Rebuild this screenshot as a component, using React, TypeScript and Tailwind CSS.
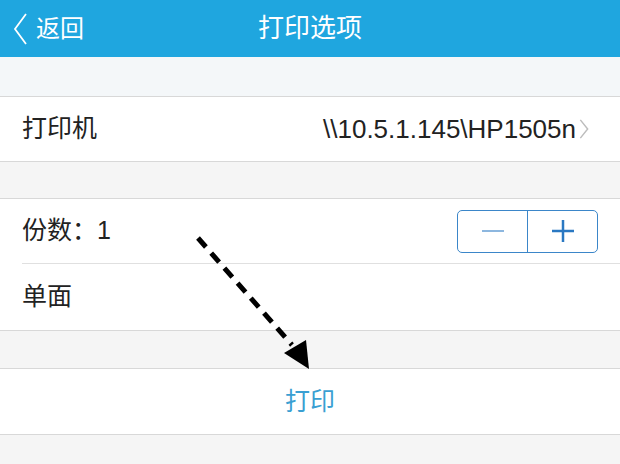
import React from 'react';

const font = { fontFamily: '"Liberation Sans", "Noto Sans CJK SC", sans-serif' };

function Chevron({ className }: { className?: string }) {
  return (
    <svg viewBox="0 0 12 24" className={className} fill="none" stroke="currentColor" strokeWidth="1.6">
      <path d="M2 2 L10 12 L2 22" />
    </svg>
  );
}

export default function App() {
  return (
    <div className="w-[620px] h-[464px] overflow-hidden bg-[#f5f5f5] relative" style={font}>
      <div className="h-[57px] bg-[#1fa6df] flex items-center relative">
        <div className="flex items-center pl-[12px] text-white">
          <svg viewBox="0 0 16 32" className="w-[16px] h-[32px]" fill="none" stroke="currentColor" strokeWidth="1.8">
            <path d="M14 1 L3 16 L14 31" />
          </svg>
          <span className="ml-[8px] text-[24px]">返回</span>
        </div>
        <div className="absolute inset-0 flex items-center justify-center text-white text-[26px]">打印选项</div>
      </div>

      <div className="h-[39px] bg-[#f4f7f9]" />

      <div className="border-y border-[#d8d8d8] bg-white h-[66px] flex items-center justify-between pl-[22px] pr-[30px]">
        <span className="text-[25px] text-[#222]">打印机</span>
        <div className="flex items-center text-[#222]">
          <span className="text-[26px]">\\10.5.1.145\HP1505n</span>
          <Chevron className="w-[12px] h-[22px] text-[#bdbdbd] ml-[2px]" />
        </div>
      </div>

      <div className="h-[36px]" />

      <div className="border-y border-[#d8d8d8] bg-white">
        <div className="h-[64px] flex items-center justify-between pl-[22px] pr-[22px]">
          <span className="text-[25px] text-[#222]">份数：1</span>
          <div className="flex w-[141px] h-[43px] border border-[#3b86c9] rounded-[5px] overflow-hidden">
            <div className="flex-1 flex items-center justify-center border-r border-[#3b86c9]">
              <div className="w-[22px] h-[2px] bg-[#8db7df]" />
            </div>
            <div className="flex-1 flex items-center justify-center">
              <svg viewBox="0 0 24 24" className="w-[24px] h-[24px]" stroke="#2a78c2" strokeWidth="2.5">
                <path d="M12 1 V23 M1 12 H23" />
              </svg>
            </div>
          </div>
        </div>
        <div className="ml-[22px] h-px bg-[#e0e0e0]" />
        <div className="h-[66px] flex items-center pl-[22px]">
          <span className="text-[25px] text-[#222]">单面</span>
        </div>
      </div>

      <div className="h-[37px]" />

      <div className="border-y border-[#d8d8d8] bg-white h-[67px] flex items-center justify-center">
        <span className="text-[25px] text-[#3a9fd2]">打印</span>
      </div>

      <svg className="absolute left-0 top-0 pointer-events-none" width="620" height="464">
        <line x1="198" y1="238" x2="292" y2="345" stroke="#000" strokeWidth="5" strokeDasharray="12 8" />
        <polygon points="284,353 306,340 309,369" fill="#000" />
      </svg>
    </div>
  );
}
